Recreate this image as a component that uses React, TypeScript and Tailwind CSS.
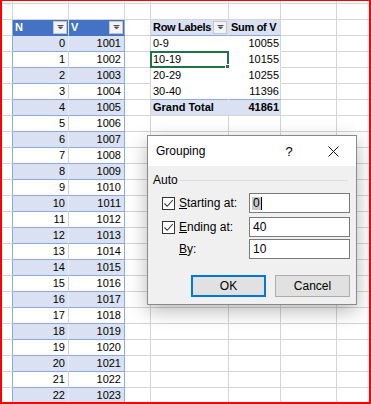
import React from 'react';

// column widths, right gridline included
const COLS = ['w-[13px]', 'w-[56px]', 'w-[56px]', 'w-[26px]', 'w-[78px]', 'w-[52px]', 'w-[56px]', 'flex-1'];

const pivotRows = [
  ['0-9', '10055'],
  ['10-19', '10155'],
  ['20-29', '10255'],
  ['30-40', '11396'],
];

const FilterButton = () => (
  <span className="absolute right-[1px] top-[1px] flex h-[13px] w-[14px] items-center justify-center border border-[#c6c6c6] bg-[#f3f3f3]">
    <svg width="7" height="5" viewBox="0 0 7 5">
      <path d="M0.5 0.5h6M1.5 2h4L3.5 4z" stroke="#555" strokeWidth="1" fill="#555" />
    </svg>
  </span>
);

const Check = () => (
  <span className="flex h-[13px] w-[13px] shrink-0 items-center justify-center border border-[#333] bg-white">
    <svg width="11" height="11" viewBox="0 0 11 11">
      <path d="M1.5 5.5L4.2 8.3L9.8 2" stroke="#333" strokeWidth="1.1" fill="none" />
    </svg>
  </span>
);

type Cell = { rc: string; bc: string; bg: string; body: React.ReactNode };

function cellFor(r: number, c: number): Cell {
  let rc = 'border-r-[#d4d4d4]';
  let bc = 'border-b-[#d4d4d4]';
  let bg = 'bg-white';
  let body: React.ReactNode = null;

  // N / V table
  if (r >= 2 && c === 0) rc = 'border-r-[#8ea9db]';
  if (r === 2 && (c === 1 || c === 2)) {
    bg = 'bg-[#4472c4]';
    bc = 'border-b-[#4472c4]';
    rc = c === 2 ? 'border-r-[#8ea9db]' : 'border-r-[#dfe4ee]';
    body = (
      <>
        <span className="pl-[2px] font-bold text-white">{c === 1 ? 'N' : 'V'}</span>
        <FilterButton />
      </>
    );
  }
  if (r >= 3 && (c === 1 || c === 2)) {
    const i = r - 3;
    const band = i % 2 === 0;
    bg = band ? 'bg-[#d9e1f2]' : 'bg-white';
    bc = 'border-b-[#8ea9db]';
    if (c === 2) rc = 'border-r-[#8ea9db]';
    else rc = band ? 'border-r-[#e9edf6]' : 'border-r-[#d4d4d4]';
    body = <span className="ml-auto pr-[3px]">{c === 1 ? i : 1001 + i}</span>;
  }

  // pivot table
  if (r >= 2 && r <= 7 && (c === 4 || c === 5)) {
    if (r === 2 || r === 7) {
      bg = 'bg-[#d9e1f2]';
      if (c === 4) rc = 'border-r-[#d9e1f2]';
      if (r === 2) bc = 'border-b-[#8ea9db]';
    } else {
      if (c === 4) rc = 'border-r-white';
      bc = r === 6 ? 'border-b-[#8ea9db]' : 'border-b-white';
    }
    if (r === 2) {
      body =
        c === 4 ? (
          <>
            <span className="pl-[2px] font-bold tracking-[-0.3px]">Row Labels</span>
            <FilterButton />
          </>
        ) : (
          <span className="pl-[2px] font-bold tracking-[-0.3px]">Sum of V</span>
        );
    } else if (r === 7) {
      body =
        c === 4 ? (
          <span className="pl-[2px] font-bold">Grand Total</span>
        ) : (
          <span className="ml-auto pr-[1px] font-bold">41861</span>
        );
    } else {
      const [label, val] = pivotRows[r - 3];
      body =
        c === 4 ? (
          <>
            <span className="pl-[2px]">{label}</span>
            {r === 4 && (
              <>
                <span className="absolute -left-[1px] -top-[1px] h-[17px] w-[79px] border-2 border-[#217346]" />
                <span className="absolute -right-[3px] bottom-[-3px] h-[6px] w-[6px] border border-white bg-[#217346]" />
              </>
            )}
          </>
        ) : (
          <span className="ml-auto pr-[1px]">{val}</span>
        );
    }
  }

  return { rc, bc, bg, body };
}

const Sheet = () => {
  const rows = [];
  for (let r = 0; r < 26; r++) {
    rows.push(
      <div key={r} className={`flex ${r === 0 ? 'h-[4px]' : 'h-[16px]'}`}>
        {COLS.map((w, c) => {
          const { rc, bc, bg, body } = cellFor(r, c);
          return (
            <div
              key={c}
              className={`relative flex shrink-0 items-center whitespace-nowrap border-r border-b ${w} ${rc} ${bc} ${bg}`}
            >
              {body}
            </div>
          );
        })}
      </div>
    );
  }
  return <div className="flex flex-col">{rows}</div>;
};

const Field = ({ value, active }: { value: string; active?: boolean }) => (
  <div className="ml-auto flex h-[20px] w-[101px] items-center border border-[#7a7a7a] bg-white pl-[2px]">
    {active ? (
      <>
        <span className="bg-[#c8c8c8] px-[1px] leading-[13px]">{value}</span>
        <span className="h-[13px] w-[1px] bg-black" />
      </>
    ) : (
      <span className="px-[1px]">{value}</span>
    )}
  </div>
);

const GroupingDialog = () => (
  <div className="absolute left-[147px] top-[135px] flex h-[170px] w-[210px] flex-col border border-[#8a8a8a] bg-[#f0f0f0] text-[12px] text-black shadow-[0_6px_18px_rgba(0,0,0,0.28)]">
    <div className="flex h-[30px] items-center bg-white">
      <span className="pl-[8px]">Grouping</span>
      <div className="ml-auto flex h-full">
        <span className="flex w-[44px] items-center justify-center text-[13px]">?</span>
        <span className="flex w-[45px] items-center justify-center">
          <svg width="11" height="11" viewBox="0 0 11 11">
            <path d="M0.5 0.5L10.5 10.5M10.5 0.5L0.5 10.5" stroke="#111" strokeWidth="1" />
          </svg>
        </span>
      </div>
    </div>

    <div className="flex flex-col">
      <div className="mt-[7px] flex h-[14px] items-center pl-[5px] pr-[8px]">
        <span>Auto</span>
        <span className="ml-[2px] h-px flex-1 bg-[#dcdcdc]" />
      </div>

      <div className="mt-[6px] flex h-[20px] items-center pl-[14px] pr-[6px]">
        <Check />
        <span className="ml-[4px]">
          <span className="underline">S</span>tarting at:
        </span>
        <Field value="0" active />
      </div>

      <div className="mt-[4px] flex h-[20px] items-center pl-[14px] pr-[6px]">
        <Check />
        <span className="ml-[4px]">
          <span className="underline">E</span>nding at:
        </span>
        <Field value="40" />
      </div>

      <div className="mt-[2px] flex h-[20px] items-center pl-[31px] pr-[6px]">
        <span>
          <span className="underline">B</span>y:
        </span>
        <Field value="10" />
      </div>

      <div className="mt-[16px] flex justify-end gap-[9px] pr-[6px]">
        <button className="h-[22px] w-[75px] border-2 border-[#0078d7] bg-[#e1e1e1]">OK</button>
        <button className="h-[22px] w-[75px] border border-[#adadad] bg-[#e1e1e1]">Cancel</button>
      </div>
    </div>
  </div>
);

export default function App() {
  return (
    <div className="relative h-[404px] w-[371px] overflow-hidden bg-white font-['Liberation_Sans',Arial,sans-serif] text-[11px] leading-none text-black">
      <Sheet />
      <GroupingDialog />
      <div className="pointer-events-none absolute inset-0 border-x-2 border-b-2 border-t border-[#ff0000]" />
    </div>
  );
}
